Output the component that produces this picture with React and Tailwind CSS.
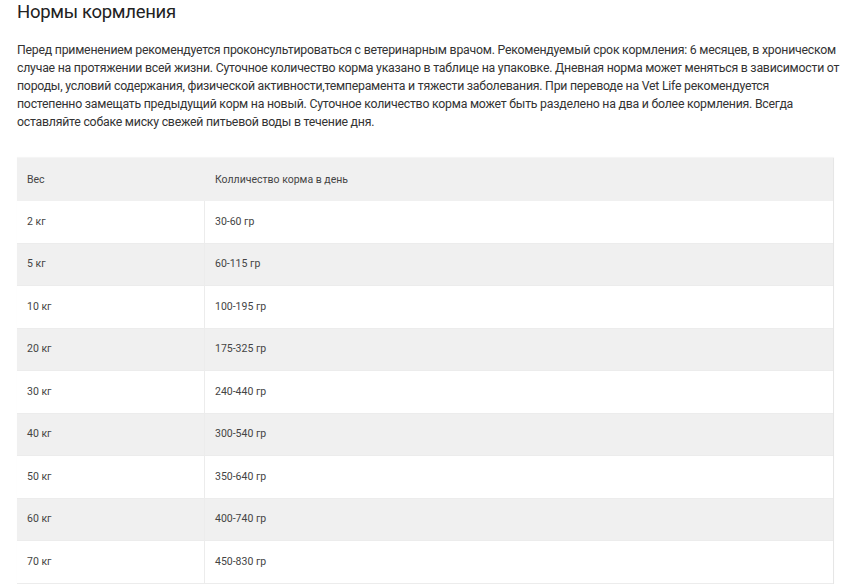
import React from 'react';

const rows = [
    ['2 кг', '30-60 гр'],
    ['5 кг', '60-115 гр'],
    ['10 кг', '100-195 гр'],
    ['20 кг', '175-325 гр'],
    ['30 кг', '240-440 гр'],
    ['40 кг', '300-540 гр'],
    ['50 кг', '350-640 гр'],
    ['60 кг', '400-740 гр'],
    ['70 кг', '450-830 гр'],
];

const lines = [
    'Перед применением рекомендуется проконсультироваться с ветеринарным врачом. Рекомендуемый срок кормления: 6 месяцев, в хроническом',
    'случае на протяжении всей жизни. Суточное количество корма указано в таблице на упаковке. Дневная норма может меняться в зависимости от',
    'породы, условий содержания, физической активности,темперамента и тяжести заболевания. При переводе на Vet Life рекомендуется',
    'постепенно замещать предыдущий корм на новый. Суточное количество корма может быть разделено на два и более кормления. Всегда',
    'оставляйте собаке миску свежей питьевой воды в течение дня.',
];

const App = () => {
    return (
        <div className="w-[848px] h-[585px] bg-white overflow-hidden font-['Roboto',sans-serif] text-[#333]">
            <div className="pl-[17px] pr-[14px]">
                {/* Заголовок */}
                <h2 className="pt-[1px] text-[18.5px] leading-[22px] tracking-[-0.3px] text-[#222] font-normal">Нормы кормления</h2>

                {/* Описание */}
                <div className="mt-[18px] text-[12.3px] leading-[18px] tracking-[-0.23px]">
                    {lines.map((l, i) => (
                        <div key={i} className="whitespace-nowrap">{l}</div>
                    ))}
                </div>

                {/* Таблица */}
                <div className="mt-[27px] w-[817px] border-r border-[#e6e6e6] shadow-[0_-1px_1px_rgba(0,0,0,0.04)] text-[10.5px] text-[#444]">
                    <div className="flex h-[43px] items-center bg-[#f0f0f0]">
                        <div className="w-[188px] pl-[10px]">Вес</div>
                        <div className="pl-[10px]">Колличество корма в день</div>
                    </div>
                    {rows.map(([w, q], i) => (
                        <div
                            key={w}
                            className={`flex h-[42.5px] items-center border-b border-[#ececec] ${i % 2 === 0 ? 'bg-white' : 'bg-[#f0f0f0]'}`}
                        >
                            <div className="w-[188px] h-full flex items-center pl-[10px] border-r border-[#ececec]">{w}</div>
                            <div className="pl-[10px]">{q}</div>
                        </div>
                    ))}
                </div>
            </div>
        </div>
    );
};

export default App;
